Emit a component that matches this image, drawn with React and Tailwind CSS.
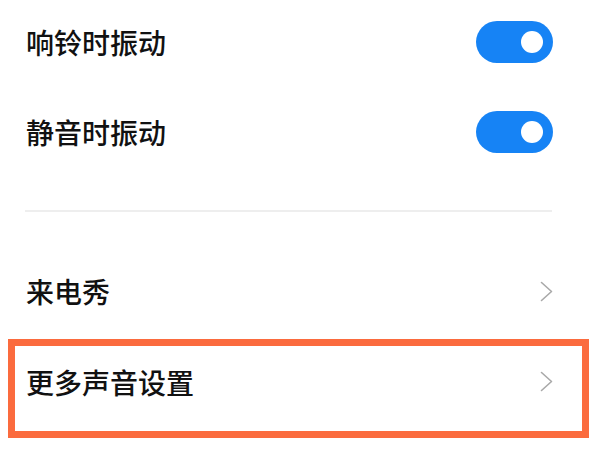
import React from "react";

function Toggle() {
  return (
    <div className="w-[77px] h-[42px] rounded-full bg-[#1683f5] flex items-center justify-end pr-[10px]">
      <div className="w-[22px] h-[22px] rounded-full bg-white" />
    </div>
  );
}

function Chevron() {
  return (
    <svg width="13" height="21" viewBox="0 0 13 21" fill="none">
      <polyline points="1.5,1.5 11.5,10.5 1.5,19.5" stroke="#a9a9a9" strokeWidth="1.6" strokeLinecap="round" strokeLinejoin="round" />
    </svg>
  );
}

export default function App() {
  return (
    <div
      className="w-[600px] h-[450px] bg-white overflow-hidden flex flex-col text-[#111111] font-medium"
      style={{ fontFamily: '"Noto Sans CJK SC", "Noto Sans", sans-serif' }}
    >
      <div className="h-[84px] flex items-center justify-between pl-[26px] pr-[47px]">
        <span className="text-[28px] leading-none">响铃时振动</span>
        <Toggle />
      </div>
      <div className="h-[96px] flex items-center justify-between pl-[26px] pr-[47px]">
        <span className="text-[28px] leading-none">静音时振动</span>
        <Toggle />
      </div>
      <div className="mt-[30px] mx-[25px] mr-[48px] h-[2px] bg-[#eeeeee]" />
      <div className="mt-[34px] h-[90px] flex items-center justify-between pl-[26px] pr-[47px]">
        <span className="text-[28px] leading-none">来电秀</span>
        <Chevron />
      </div>
      <div className="mt-[3px] ml-[8px] w-[581px] h-[99px] border-[7px] border-[#fb6b3e] flex items-center justify-between pl-[11px] pr-[29px] pb-[14px]">
        <span className="text-[28px] leading-none">更多声音设置</span>
        <Chevron />
      </div>
    </div>
  );
}
